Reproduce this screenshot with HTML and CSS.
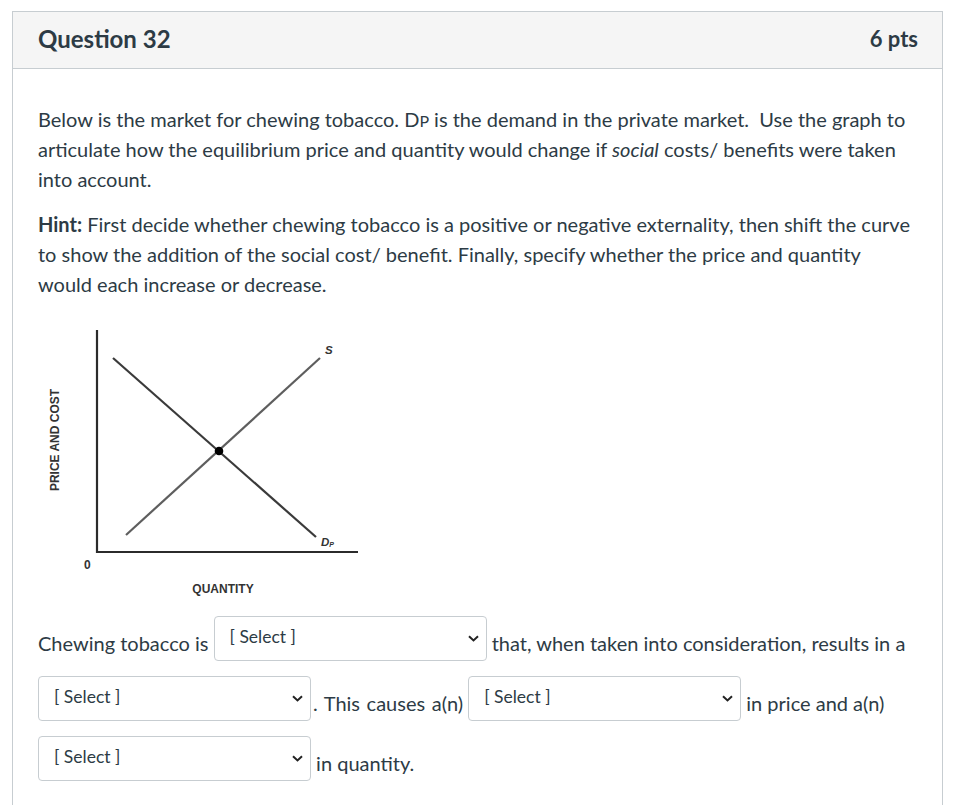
FILE: index.html
```html
<!DOCTYPE html>
<html>
<head>
<meta charset="utf-8">
<link rel="stylesheet" href="styles.css">
</head>
<body>
<div class="card">
  <div class="card-header">
    <div class="q-title">Question 32</div>
    <div class="q-pts">6 pts</div>
  </div>
  <div class="card-body">
    <p class="para">Below is the market for chewing tobacco. D<span class="smallcap">P</span> is the demand in the private market.&nbsp; Use the graph to articulate how the equilibrium price and quantity would change if <em>social</em> costs/ benefits were taken into account.</p>
    <p class="para"><strong>Hint:</strong> First decide whether chewing tobacco is a positive or negative externality, then shift the curve to show the addition of the social cost/ benefit. Finally, specify whether the price and quantity would each increase or decrease.</p>
    <div class="graph">
      <svg width="340" height="290" viewBox="0 0 340 290">
        <g transform="translate(-30,-320)">
          <line x1="97" y1="331" x2="97" y2="554" stroke="#2b2b2b" stroke-width="2.2"/>
          <line x1="96" y1="553" x2="358" y2="553" stroke="#2b2b2b" stroke-width="2.2"/>
          <line x1="113" y1="359" x2="316" y2="538" stroke="#3a3a3a" stroke-width="2.2"/>
          <line x1="126" y1="536" x2="320" y2="359" stroke="#5e5e5e" stroke-width="2.2"/>
          <circle cx="219" cy="452" r="4.3" fill="#000"/>
          <text x="325" y="355" class="lbl-it">S</text>
          <text x="321" y="547" class="lbl-it">D<tspan font-size="7" dy="1">P</tspan></text>
          <text x="84" y="570" class="lbl">0</text>
          <text x="223" y="594" class="lbl" text-anchor="middle">QUANTITY</text>
          <text x="0" y="0" class="lbl" text-anchor="middle" transform="translate(59,441) rotate(-90)">PRICE AND COST</text>
        </g>
      </svg>
    </div>
    <div class="answer">
      Chewing tobacco is <span class="sel"><span class="sel-text">[ Select ]</span><svg class="chev" width="11" height="7" viewBox="0 0 11 7"><path d="M1 1.2 L5.5 5.4 L10 1.2" fill="none" stroke="#222" stroke-width="2"/></svg></span> that, when taken into consideration, results in a <span class="sel"><span class="sel-text">[ Select ]</span><svg class="chev" width="11" height="7" viewBox="0 0 11 7"><path d="M1 1.2 L5.5 5.4 L10 1.2" fill="none" stroke="#222" stroke-width="2"/></svg></span><span class="causes">. This causes a(n)</span> <span class="sel"><span class="sel-text">[ Select ]</span><svg class="chev" width="11" height="7" viewBox="0 0 11 7"><path d="M1 1.2 L5.5 5.4 L10 1.2" fill="none" stroke="#222" stroke-width="2"/></svg></span> in price and a(n) <span class="sel"><span class="sel-text">[ Select ]</span><svg class="chev" width="11" height="7" viewBox="0 0 11 7"><path d="M1 1.2 L5.5 5.4 L10 1.2" fill="none" stroke="#222" stroke-width="2"/></svg></span> in quantity.
    </div>
  </div>
</div>
</body>
</html>
```

FILE: styles.css
```css
html, body {
  margin: 0;
  padding: 0;
  background: #ffffff;
}
body {
  font-family: Lato, "Open Sans", sans-serif;
  color: #2d3b45;
  padding: 11px 0 0 12px;
}
.card {
  width: 931px;
  border: 1px solid #c7cdd1;
  border-bottom: none;
  min-height: 794px;
  box-sizing: border-box;
}
.card-header {
  display: flex;
  justify-content: space-between;
  align-items: center;
  background: #f5f5f5;
  border-bottom: 1px solid #c7cdd1;
  padding: 0 24px 4px 25px;
  box-sizing: border-box;
  height: 57px;
}
.q-title {
  font-size: 24px;
  font-weight: 700;
  color: #2d3b45;
}
.q-pts {
  font-size: 22px;
  font-weight: 700;
  color: #2d3b45;
}
.card-body {
  padding: 35px 24px 0 25px;
}
.para {
  margin: 0 0 15px 0;
  font-size: 20px;
  line-height: 30px;
}
.smallcap {
  font-size: 16px;
  line-height: 1;
}
.graph {
  margin: 20px 0 0 -8px;
  height: 290px;
}
.graph svg {
  display: block;
}
.lbl {
  font-family: "Liberation Sans", Arial, sans-serif;
  font-weight: 700;
  font-size: 12px;
  fill: #333;
}
.lbl-it {
  font-family: "Liberation Sans", Arial, sans-serif;
  font-weight: 700;
  font-style: italic;
  font-size: 11.5px;
  fill: #333;
}
.answer {
  font-size: 20px;
  line-height: 60px;
  margin-top: 4px;
}
.causes {
  margin-left: 2px;
  word-spacing: 1.5px;
}
.sel {
  display: inline-flex;
  align-items: center;
  justify-content: space-between;
  width: 273px;
  height: 45px;
  box-sizing: border-box;
  border: 1px solid #c7cdd1;
  border-radius: 4px;
  padding: 0 7px 0 15px;
  vertical-align: middle;
  line-height: 1;
  background: #fff;
  position: relative;
  top: -7px;
}
.sel-text {
  font-size: 17.5px;
  color: #2d3b45;
  position: relative;
  top: -2px;
}
.chev {
  display: block;
}
```
